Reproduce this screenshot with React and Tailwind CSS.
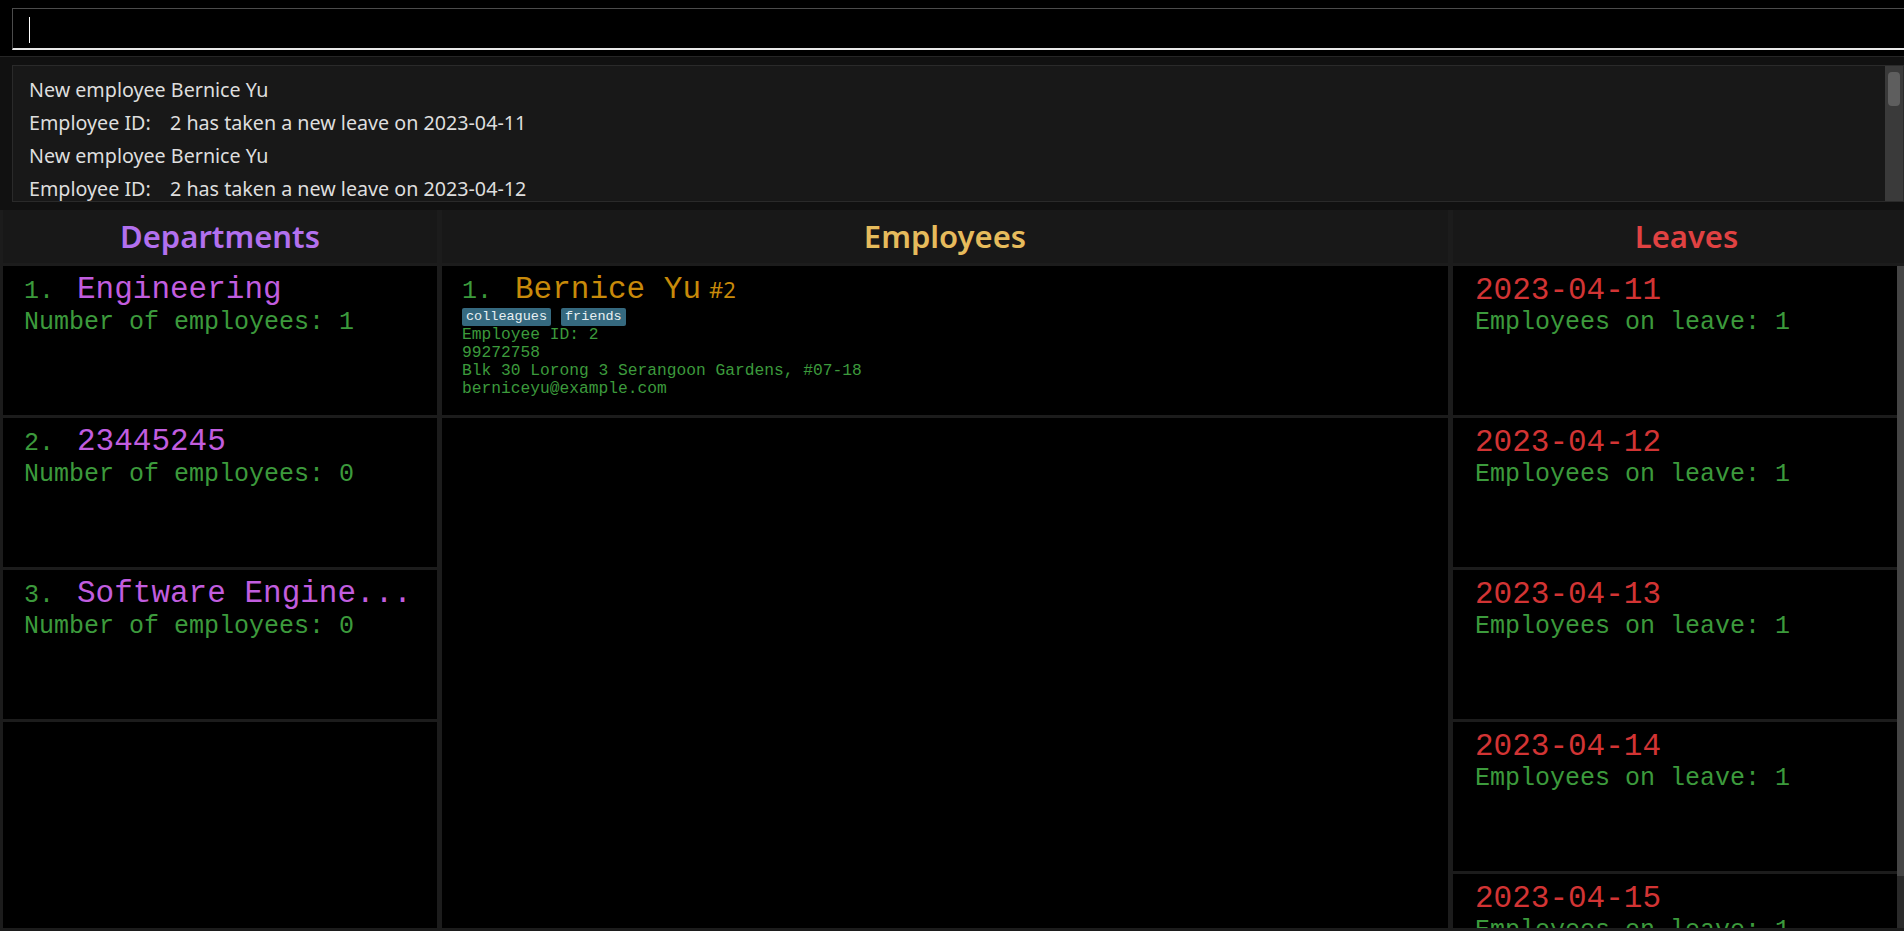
import React from 'react'

const mono = "font-['Liberation_Mono','DejaVu_Sans_Mono',monospace]"
const sans = "font-['Noto_Sans','Open_Sans',sans-serif]"

const resultLines = [
    { kind: 'new', text: 'New employee Bernice Yu' },
    { kind: 'leave', date: '2023-04-11' },
    { kind: 'new', text: 'New employee Bernice Yu' },
    { kind: 'leave', date: '2023-04-12' },
]

const departments = [
    { id: 1, name: 'Engineering', count: 1 },
    { id: 2, name: '23445245', count: 0 },
    { id: 3, name: 'Software Engine...', count: 0 },
]

const employees = [
    {
        id: 1,
        name: 'Bernice Yu',
        employeeId: 2,
        tags: ['colleagues', 'friends'],
        phone: '99272758',
        address: 'Blk 30 Lorong 3 Serangoon Gardens, #07-18',
        email: 'berniceyu@example.com',
    },
]

const leaves = ['2023-04-11', '2023-04-12', '2023-04-13', '2023-04-14', '2023-04-15']

function ColumnHeader({ title, color, extra }) {
    return (
        <div className={`h-[53px] shrink-0 bg-[#181818] flex items-center justify-center ${extra || ''}`}>
            <span className={`${sans} font-semibold text-[31px] leading-none ${color}`}>{title}</span>
        </div>
    )
}

function DepartmentCard({ dept }) {
    return (
        <div className={`h-[152px] shrink-0 border-b-[3px] border-[#1c1c1c] pl-[21px] pt-[7px] ${mono}`}>
            <div className="flex items-baseline leading-[34px]">
                <span className="w-[53px] text-[25px] text-[#3c9a3c]">{dept.id}.</span>
                <span className="text-[31px] text-[#c15ddf] whitespace-nowrap">{dept.name}</span>
            </div>
            <div className="text-[25px] leading-[28px] text-[#3c9a3c]">Number of employees: {dept.count}</div>
        </div>
    )
}

function EmployeeCard({ emp }) {
    return (
        <div className={`h-[152px] shrink-0 border-b-[3px] border-[#1c1c1c] pl-[20px] pt-[7px] ${mono}`}>
            <div className="flex items-baseline leading-[32px]">
                <span className="w-[53px] text-[25px] text-[#3c9a3c]">{emp.id}.</span>
                <span className="text-[31px] text-[#c88a0a]">{emp.name}</span>
                <span className={`ml-[8px] ${sans} text-[22px] text-[#c88a0a]`}>#{emp.employeeId}</span>
            </div>
            <div className="flex gap-[10px] h-[18px]">
                {emp.tags.map(tag => (
                    <span key={tag} className="h-[18px] px-[4px] rounded-[2px] bg-[#35697f] text-[#e8f0f2] text-[13.5px] leading-[18px]">
                        {tag}
                    </span>
                ))}
            </div>
            <div className="text-[16.25px] leading-[18px] text-[#3c9a3c]">
                <div>Employee ID: {emp.employeeId}</div>
                <div>{emp.phone}</div>
                <div>{emp.address}</div>
                <div>{emp.email}</div>
            </div>
        </div>
    )
}

function LeaveCard({ date }) {
    return (
        <div className={`h-[152px] shrink-0 border-b-[3px] border-[#1c1c1c] pl-[22px] pt-[8px] ${mono}`}>
            <div className="text-[31px] leading-[34px] text-[#d23434]">{date}</div>
            <div className="text-[25px] leading-[29px] text-[#3c9a3c]">Employees on leave: 1</div>
        </div>
    )
}

export default function App() {
    return (
        <div className="w-[1904px] h-[931px] bg-black flex flex-col overflow-hidden">
            {/* command box */}
            <div className="h-[57px] shrink-0 pt-[8px] pl-[12px] border-b border-[#262626]">
                <div className="h-[42px] bg-black border-l border-t border-[#4c4c4c] border-b-2 border-b-[#e8e8e8] relative">
                    <div className="absolute left-[16px] top-[8px] w-px h-[26px] bg-white"></div>
                </div>
            </div>

            {/* result display */}
            <div className="h-[153px] shrink-0 bg-[#111111] pt-[8px] pl-[12px] pb-[7px]">
                <div className="h-[137px] bg-[#181818] border border-[#2a2a2a] flex">
                    <div className={`flex-1 pl-[16px] pt-[7px] ${sans} text-[19.7px] leading-[33px] text-[#dedede]`}>
                        {resultLines.map((line, i) => (
                            line.kind === 'new'
                                ? <div key={i}>{line.text}</div>
                                : <div key={i} className="flex">
                                    <span className="w-[141px]">Employee ID:</span>
                                    <span>2 has taken a new leave on {line.date}</span>
                                  </div>
                        ))}
                    </div>
                    <div className="w-[18px] bg-[#3a3a3a] pt-[6px] flex justify-center">
                        <div className="w-[12px] h-[34px] rounded-[4px] bg-[#5e5e5e]"></div>
                    </div>
                </div>
            </div>

            {/* panels */}
            <div className="flex-1 min-h-0 grid grid-cols-[434px_1006px_1fr] gap-x-[5px] bg-[#1c1c1c] pl-[3px] pb-[3px]">
                <div className="flex flex-col min-h-0 gap-[3px]">
                    <ColumnHeader title="Departments" color="text-[#b270ee]" />
                    <div className="flex-1 min-h-0 bg-black overflow-hidden flex flex-col">
                        {departments.map(d => <DepartmentCard key={d.id} dept={d} />)}
                    </div>
                </div>

                <div className="flex flex-col min-h-0 gap-[3px]">
                    <ColumnHeader title="Employees" color="text-[#e6bb5c]" />
                    <div className="flex-1 min-h-0 bg-black overflow-hidden flex flex-col">
                        {employees.map(e => <EmployeeCard key={e.id} emp={e} />)}
                    </div>
                </div>

                <div className="flex flex-col min-h-0 gap-[3px]">
                    <ColumnHeader title="Leaves" color="text-[#e04242]" extra="pl-[16px]" />
                    <div className="flex-1 min-h-0 bg-black overflow-hidden flex">
                        <div className="flex-1 flex flex-col overflow-hidden">
                            {leaves.map(d => <LeaveCard key={d} date={d} />)}
                        </div>
                        <div className="w-[7px] bg-[#2a2a2a] flex flex-col">
                            <div className="w-[7px] h-[610px] bg-[#454545]"></div>
                        </div>
                    </div>
                </div>
            </div>
        </div>
    )
}
